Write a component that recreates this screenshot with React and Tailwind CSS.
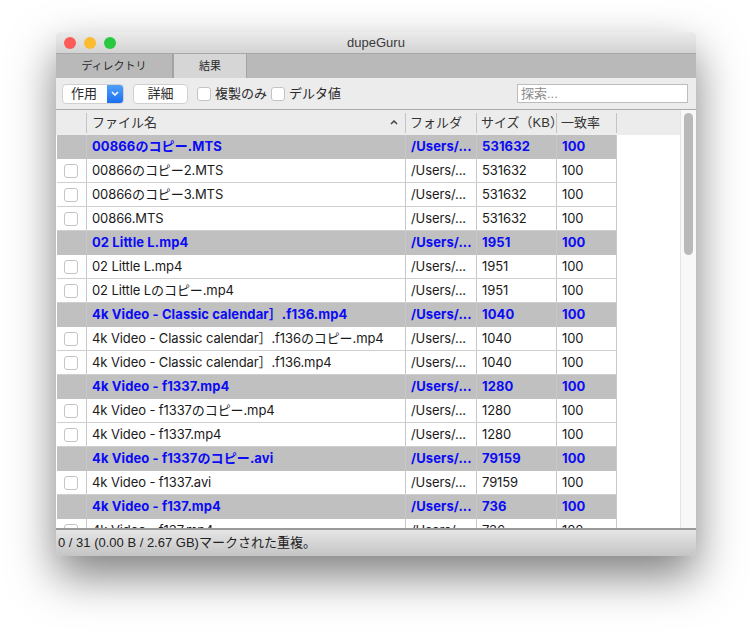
import React from 'react';

const rows = [
  { name: '00866のコピー.MTS', size: '531632', ref: true },
  { name: '00866のコピー2.MTS', size: '531632' },
  { name: '00866のコピー3.MTS', size: '531632' },
  { name: '00866.MTS', size: '531632' },
  { name: '02 Little L.mp4', size: '1951', ref: true },
  { name: '02 Little L.mp4', size: '1951' },
  { name: '02 Little Lのコピー.mp4', size: '1951' },
  { name: '4k Video - Classic calendar］.f136.mp4', size: '1040', ref: true },
  { name: '4k Video - Classic calendar］.f136のコピー.mp4', size: '1040' },
  { name: '4k Video - Classic calendar］.f136.mp4', size: '1040' },
  { name: '4k Video - f1337.mp4', size: '1280', ref: true },
  { name: '4k Video - f1337のコピー.mp4', size: '1280' },
  { name: '4k Video - f1337.mp4', size: '1280' },
  { name: '4k Video - f1337のコピー.avi', size: '79159', ref: true },
  { name: '4k Video - f1337.avi', size: '79159' },
  { name: '4k Video - f137.mp4', size: '736', ref: true },
  { name: '4k Video - f137.mp4', size: '736' },
];

const Check = ({ className = '' }) => (
  <span className={`block w-[14px] h-[14px] rounded-[3px] bg-white border border-[#c4c4c4] shrink-0 ${className}`} />
);

const Row = ({ row }) => {
  const cell = 'h-full flex items-center border-r border-[#c8c8c8] shrink-0 overflow-hidden whitespace-nowrap';
  return (
    <div
      className={`flex h-[24px] w-[560px] shrink-0 text-[13px] font-['Inter','Noto_Sans_CJK_JP',sans-serif] ${
        row.ref
          ? 'bg-[#c0c0c0] text-[#0b0bf5] font-bold tracking-[0.1px]'
          : 'bg-white text-[#1a1a1a] border-b border-[#cfcfcf] tracking-[-0.1px]'
      }`}
    >
      <div className={`${cell} w-[30px] justify-center pr-[2px]`}>{!row.ref && <Check />}</div>
      <div className={`${cell} w-[319px] pl-[5px]`}>{row.name}</div>
      <div className={`${cell} w-[71px] pl-[5px]`}>/Users/...</div>
      <div className={`${cell} w-[80px] pl-[5px]`}>{row.size}</div>
      <div className={`${cell} w-[60px] pl-[5px]`}>100</div>
    </div>
  );
};

export default function App() {
  return (
    <div className="w-[752px] h-[636px] bg-white pt-[32px] pl-[56px] overflow-hidden font-['Liberation_Sans','Noto_Sans_CJK_JP',sans-serif]">
      <div className="w-[640px] h-[524px] flex flex-col rounded-[5px] overflow-hidden bg-[#ececec] shadow-[0_20px_45px_rgba(0,0,0,0.5)]">
        {/* タイトルバー */}
        <div className="relative h-[22px] shrink-0 flex items-center justify-center bg-gradient-to-b from-[#ebebeb] to-[#d3d3d3] border-b border-[#a8a8a8] text-[13px] text-[#3a3a3a]">
          <div className="absolute left-[8px] top-[5px] flex gap-[8px]">
            <span className="w-[12px] h-[12px] rounded-full bg-[#fc5b57]" />
            <span className="w-[12px] h-[12px] rounded-full bg-[#fdbb2f]" />
            <span className="w-[12px] h-[12px] rounded-full bg-[#28c840]" />
          </div>
          dupeGuru
        </div>

        {/* タブ */}
        <div className="h-[24px] shrink-0 flex bg-[#b9b9b9] text-[11px] text-[#2a2a2a]">
          <div className="w-[118px] flex items-center justify-center border-r-2 border-[#a4a4a4]">ディレクトリ</div>
          <div className="w-[73px] flex items-center justify-center bg-[#d6d6d6] border-r border-[#a4a4a4]">結果</div>
        </div>

        {/* ツールバー */}
        <div className="h-[32px] shrink-0 flex items-center pl-[6px] pr-[8px] border-b border-[#a9a9a9] bg-[#ececec] text-[13px] text-[#2a2a2a]">
          <div className="w-[62px] h-[20px] flex rounded-[4px] bg-white border border-[#d0d0d0] overflow-hidden">
            <span className="flex-1 flex items-center pl-[8px]">作用</span>
            <span className="w-[16px] flex items-center justify-center bg-gradient-to-b from-[#4fa0f8] to-[#1a6ff0]">
              <svg width="8" height="5" viewBox="0 0 8 5" fill="none" stroke="white" strokeWidth="1.5">
                <path d="M1 1l3 3 3-3" />
              </svg>
            </span>
          </div>
          <div className="ml-[9px] w-[55px] h-[20px] flex items-center justify-center rounded-[4px] bg-white border border-[#d0d0d0]">詳細</div>
          <Check className="ml-[9px]" />
          <span className="ml-[4px]">複製のみ</span>
          <Check className="ml-[4px]" />
          <span className="ml-[4px]">デルタ値</span>
          <div className="ml-auto w-[171px] h-[19px] flex items-center pl-[3px] bg-white border border-[#bdbdbd] text-[#8c8c8c]">探索...</div>
        </div>

        {/* テーブル */}
        <div className="flex-1 min-h-0 flex bg-white">
          <div className="flex-1 min-w-0 flex flex-col overflow-hidden">
            <div className="h-[25px] shrink-0 flex items-center bg-[#ececec] text-[13px] text-[#333]">
              <div className="w-[30px] h-[20px] ml-px border-r border-[#c4c4c4]" />
              <div className="w-[319px] h-[20px] flex items-center justify-between pl-[5px] pr-[7px] border-r border-[#c4c4c4]">
                ファイル名
                <svg width="8" height="5" viewBox="0 0 8 5" fill="none" stroke="#444" strokeWidth="1.5">
                  <path d="M1 4l3-3 3 3" />
                </svg>
              </div>
              <div className="w-[71px] h-[20px] flex items-center pl-[4px] border-r border-[#c4c4c4]">フォルダ</div>
              <div className="w-[80px] h-[20px] flex items-center pl-[4px] border-r border-[#c4c4c4] whitespace-nowrap overflow-hidden">サイズ（KB）</div>
              <div className="w-[60px] h-[20px] flex items-center pl-[4px] border-r border-[#c4c4c4]">一致率</div>
            </div>
            <div className="flex-1 min-h-0 flex flex-col pl-px overflow-hidden">
              {rows.map((row, i) => (
                <Row key={i} row={row} />
              ))}
            </div>
          </div>
          {/* スクロールバー */}
          <div className="w-[16px] shrink-0 pl-[3px] pt-[3px] bg-[#f8f8f8] border-l border-[#e4e4e4]">
            <div className="w-[9px] h-[142px] rounded-full bg-[#b9b9b9]" />
          </div>
        </div>

        {/* ステータスバー */}
        <div className="h-[28px] shrink-0 flex items-center pl-[2px] bg-gradient-to-b from-[#e6e6e6] to-[#c4c4c4] border-t-2 border-[#9a9a9a] text-[13px] text-[#222]">
          0 / 31 (0.00 B / 2.67 GB)マークされた重複。
        </div>
      </div>
    </div>
  );
}
